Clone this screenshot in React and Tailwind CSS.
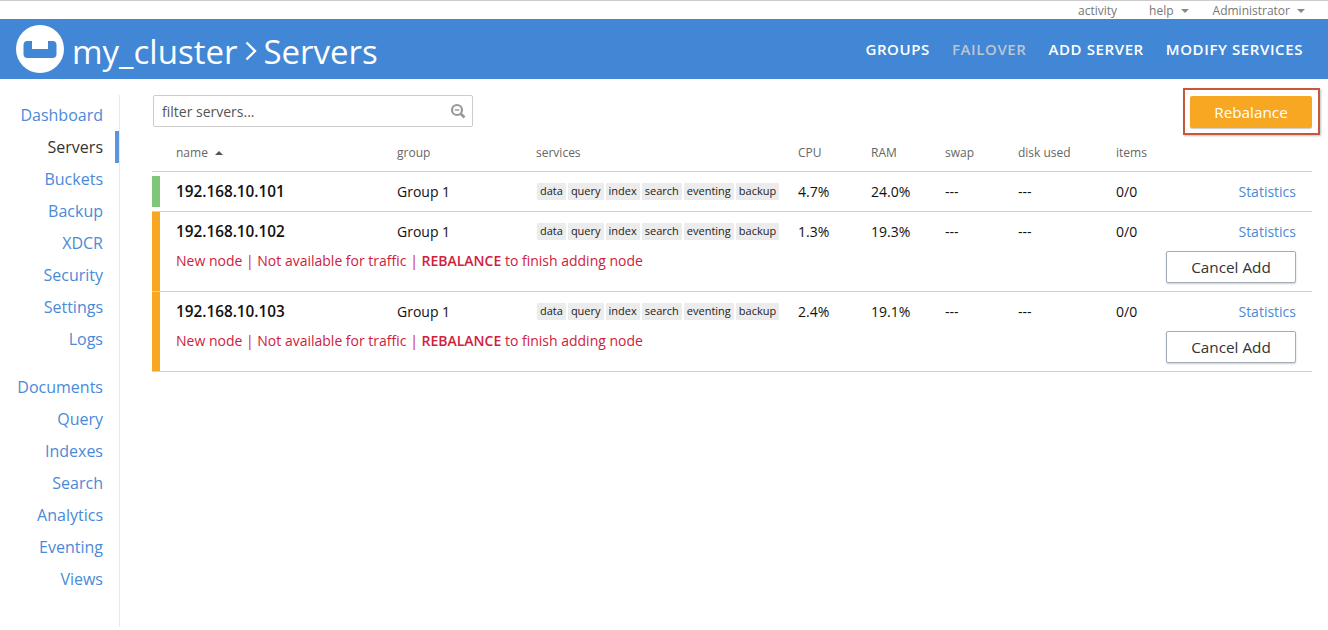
const NAV_TOP = ["Dashboard", "Servers", "Buckets", "Backup", "XDCR", "Security", "Settings", "Logs"];
const NAV_BOTTOM = ["Documents", "Query", "Indexes", "Search", "Analytics", "Eventing", "Views"];
const SERVICES = ["data", "query", "index", "search", "eventing", "backup"];

const SERVERS = [
  { ip: "192.168.10.101", cpu: "4.7%", ram: "24.0%", pending: false },
  { ip: "192.168.10.102", cpu: "1.3%", ram: "19.3%", pending: true },
  { ip: "192.168.10.103", cpu: "2.4%", ram: "19.1%", pending: true },
];

const COLS = "grid grid-cols-[221px_139px_262px_73px_74px_73px_98px_1fr] pl-6 pr-4";

const Caret = ({ className }) => (
  <svg width="8" height="4" viewBox="0 0 8 4" className={className}>
    <path d="M0 0h8L4 4z" fill="currentColor" />
  </svg>
);

const Logo = () => (
  <svg width="48" height="48" viewBox="0 0 48 48" className="shrink-0">
    <circle cx="24" cy="24" r="24" fill="#fff" />
    <path
      d="M7.500 20a4 4 0 0 1 4-4H16v8h16v-8h4.500a4 4 0 0 1 4 4v9a4 4 0 0 1-4 4h-25a4 4 0 0 1-4-4z"
      fill="#4287d6"
    />
  </svg>
);

const NavItem = ({ label }) => {
  const active = label === "Servers";
  return (
    <a
      className={`block h-8 pr-3 text-right text-[16px] leading-8 border-r-4 ${
        active ? "text-[#333] border-[#5b94e0]" : "text-[#4a8ad8] border-transparent"
      }`}
    >
      {label}
    </a>
  );
};

const ServerRow = ({ server }) => (
  <div className="relative border-b border-[#d0d0d0]">
    <div
      className={
        server.pending
          ? "absolute left-0 top-0 bottom-0 w-2 bg-[#f8a723]"
          : "absolute left-0 top-1 bottom-1 w-2 bg-[#7fc777]"
      }
    />
    <div className={`${COLS} h-[39px] items-center text-[14px] text-[#111]`}>
      <div className="text-[15.3px] font-semibold">{server.ip}</div>
      <div>Group 1</div>
      <div className="flex gap-[2px] ml-px">
        {SERVICES.map((s) => (
          <span key={s} className="bg-[#ececec] rounded-[1px] px-[3px] h-[17px] text-[11px] leading-[16px] text-[#222]">
            {s}
          </span>
        ))}
      </div>
      <div>{server.cpu}</div>
      <div>{server.ram}</div>
      <div>---</div>
      <div>---</div>
      <div className="flex justify-between">
        <span>0/0</span>
        <a className="text-[#4a8ad8]">Statistics</a>
      </div>
    </div>
    {server.pending && (
      <div className="flex justify-between items-start h-10 pl-6 pr-4">
        <div className="text-[14px] leading-5 text-[#d0213c]">
          New node | Not available for traffic | <b className="font-semibold">REBALANCE</b> to finish adding node
        </div>
        <button className="w-[130px] h-8 bg-white border border-[#a3acb8] rounded-[2px] shadow-[0_1px_2px_rgba(0,0,0,0.2)] text-[15.3px] text-[#333]">
          Cancel Add
        </button>
      </div>
    )}
  </div>
);

const App = () => {
  return (
    <div className="min-h-[630px] bg-white font-['Open_Sans',sans-serif]">
      <div className="h-[19px] pt-px border-t border-[#ccc] flex justify-end items-center gap-6 pr-[23px] text-[12px] text-[#777]">
        <span className="mr-2">activity</span>
        <span className="flex items-center gap-[7px]">help <Caret className="text-[#888]" /></span>
        <span className="flex items-center gap-[7px]">Administrator <Caret className="text-[#888]" /></span>
      </div>

      <header className="h-[60px] bg-[#4287d6] flex items-center justify-between pl-4 pr-[25px] text-white">
        <div className="flex items-center gap-2">
          <Logo />
          <h1 className="flex items-center mt-1 text-[33px] font-normal leading-none">
            <span>my_cluster</span>
            <svg width="12" height="20" viewBox="0 0 12 20" fill="none" className="ml-2 mr-[6px]">
              <path d="M1.500 1.500 10 10l-8.500 8.500" stroke="#fff" strokeWidth="2.400" />
            </svg>
            <span>Servers</span>
          </h1>
        </div>
        <nav className="flex gap-[22px] pt-px text-[15px] font-semibold tracking-[0.6px]">
          <a>GROUPS</a>
          <a className="text-[#bcc5d2]">FAILOVER</a>
          <a>ADD SERVER</a>
          <a>MODIFY SERVICES</a>
        </nav>
      </header>

      <div className="flex pt-4">
        <aside className="w-[120px] shrink-0 border-r border-[#e8e8e8] h-[532px] pt-1">
          {NAV_TOP.map((n) => (
            <NavItem key={n} label={n} />
          ))}
          <div className="h-4" />
          {NAV_BOTTOM.map((n) => (
            <NavItem key={n} label={n} />
          ))}
        </aside>

        <main className="flex-1 pl-8 pr-4">
          <div className="relative flex justify-between items-start pl-px">
            <div className="w-[320px] h-8 border border-[#ccc] rounded-[2px] flex items-center justify-between pl-2 pr-[6px] text-[14px] text-[#555]">
              <span>filter servers...</span>
              <svg width="16" height="16" viewBox="0 0 16 16" fill="none">
                <circle cx="7" cy="7" r="5" stroke="#999" strokeWidth="2.2" />
                <path d="M10.500 10.500 14.500 14.500" stroke="#999" strokeWidth="2.600" />
                <path d="M4.800 7h4.400" stroke="#999" strokeWidth="1.500" />
              </svg>
            </div>
            <button className="w-[122px] h-8 mt-px bg-[#f8a723] rounded-[2px] text-[15.3px] text-white shadow-[0_1px_1px_rgba(0,0,0,0.2)]">
              Rebalance
            </button>
            <div className="absolute -right-2 -top-[7px] w-[137px] h-[47px] border-2 border-[#c8573a] shadow-[1px_1px_2px_rgba(0,0,0,0.25)]" />
          </div>

          <div className={`${COLS} mt-[15px] h-[29px] items-start pt-px border-b border-[#d0d0d0] text-[12px] text-[#666]`}>
            <div className="flex items-center gap-[7px]">
              name
              <svg width="8" height="4" viewBox="0 0 8 4" className="text-[#555]">
                <path d="M4 0l4 4H0z" fill="currentColor" />
              </svg>
            </div>
            <div>group</div>
            <div>services</div>
            <div>CPU</div>
            <div>RAM</div>
            <div>swap</div>
            <div>disk used</div>
            <div>items</div>
          </div>

          {SERVERS.map((s) => (
            <ServerRow key={s.ip} server={s} />
          ))}
        </main>
      </div>
    </div>
  );
};

export default App;
